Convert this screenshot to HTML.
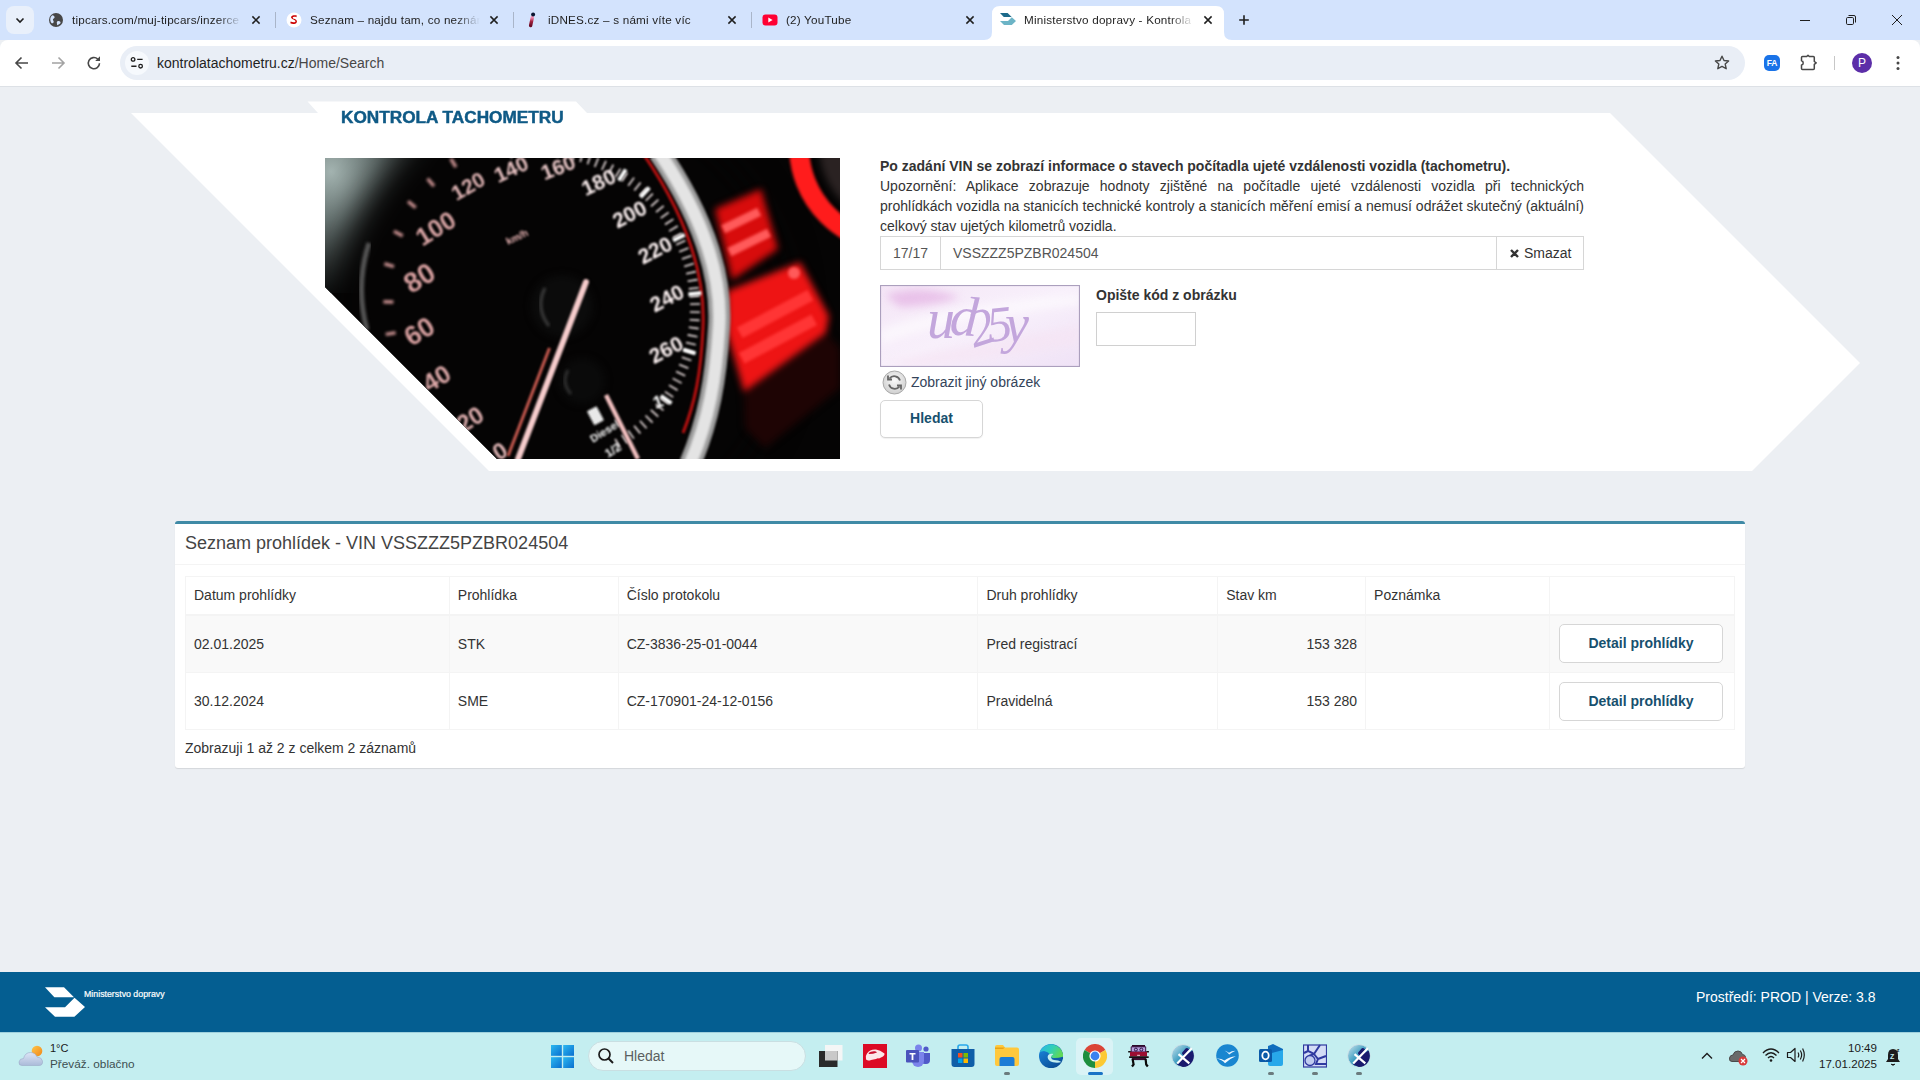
<!DOCTYPE html>
<html><head><meta charset="utf-8">
<style>
*{box-sizing:border-box;margin:0;padding:0}
html,body{width:1920px;height:1080px;overflow:hidden;font-family:"Liberation Sans",sans-serif;background:#eceff3;position:relative}
.abs{position:absolute}
#tabbar{left:0;top:0;width:1920px;height:40px;background:#d3e3fd}
#toolbar{left:0;top:40px;width:1920px;height:47px;background:#fff;border-bottom:1px solid #dde1e6;border-radius:8px 8px 0 0}
#page{left:0;top:87px;width:1920px;height:885px;background:#eceff3}
#footer{left:0;top:972px;width:1920px;height:60px;background:#045e91}
#taskbar{left:0;top:1032px;width:1920px;height:48px;background:#c4eef0}
.tt{top:12px;height:16px;font-size:11.7px;line-height:16px;color:#1f1f1f;white-space:nowrap;overflow:hidden;letter-spacing:0.2px;-webkit-mask-image:linear-gradient(90deg,#000 0,#000 calc(100% - 24px),transparent 100%)}
.sep{top:12px;width:1px;height:16px;background:#a9b5c9}
#tbl th,#tbl td{border:1px solid #f4f4f4;padding:0 8px;text-align:left;font-weight:400;vertical-align:middle}
#tbl th{border-bottom:2px solid #f4f4f4}
.dbtn{width:164px;height:39px;border:1.5px solid #d6d6d6;border-radius:5px;background:#fff;font-weight:700;color:#17506e;text-align:center;line-height:37px;margin-left:1px}
</style></head><body>
<!-- TAB BAR -->
<div id="tabbar" class="abs">
  <div class="abs" style="left:6px;top:6px;width:28px;height:28px;border-radius:8px;background:#e9f0fb"></div>
  <svg class="abs" style="left:13px;top:13px" width="14" height="14" viewBox="0 0 14 14"><path d="M3.5 5.5 L7 9 L10.5 5.5" fill="none" stroke="#1f1f1f" stroke-width="1.6"/></svg>

  <!-- tab 1 -->
  <svg class="abs" style="left:48px;top:12px" width="16" height="16" viewBox="0 0 16 16"><circle cx="8" cy="8" r="7" fill="#474747"/><path d="M4.2 3.2c1.5.2 2.6 1 2.4 2.2-.2 1-1.6 1.1-1.7 2.2-.1.9 1 1.3.8 2.5-.2.9-1.2 1.4-2 1.2C2.5 10 2 8 2.4 6c.3-1.2 1-2.2 1.8-2.8zM9.5 9.2c.9-.4 2.2-.2 2.8.5.4.5.3 1.3-.2 1.9-.8.9-2 1.5-3.1 1.6.3-.6.1-1.2-.1-1.8-.2-.9-.2-1.8.6-2.2z" fill="#d3e3fd"/></svg>
  <div class="abs tt" style="left:72px;width:170px">tipcars.com/muj-tipcars/inzerce</div>
  <svg class="abs xb" style="left:250px;top:14px" width="12" height="12" viewBox="0 0 12 12"><path d="M2.4 2.4L9.6 9.6M9.6 2.4L2.4 9.6" stroke="#1f1f1f" stroke-width="1.5"/></svg>
  <div class="abs sep" style="left:275px"></div>

  <!-- tab 2 -->
  <svg class="abs" style="left:286px;top:12px" width="16" height="16" viewBox="0 0 16 16"><circle cx="8" cy="8" r="7.5" fill="#fff"/><path d="M10.8 3.6C9.4 2.9 6.2 3 5.3 4.6c-.9 1.7 1.2 2.6 2.9 3.3 1.5.6 1.6 1.5.9 2-.9.6-3 .4-4.4-.4l-.4 1.8c1.8.9 4.8 1 6.1-.4 1.2-1.4.4-2.9-1.6-3.8-1.4-.6-2.3-1-2-1.7.4-.7 2.6-.7 3.6-.2z" fill="#cc0000"/></svg>
  <div class="abs tt" style="left:310px;width:170px">Seznam – najdu tam, co neznám</div>
  <svg class="abs xb" style="left:488px;top:14px" width="12" height="12" viewBox="0 0 12 12"><path d="M2.4 2.4L9.6 9.6M9.6 2.4L2.4 9.6" stroke="#1f1f1f" stroke-width="1.5"/></svg>
  <div class="abs sep" style="left:513px"></div>

  <!-- tab 3 -->
  <svg class="abs" style="left:524px;top:12px" width="16" height="16" viewBox="0 0 16 16"><defs><linearGradient id="idn" x1="0" y1="0" x2="0" y2="1"><stop offset="0" stop-color="#f08ab0"/><stop offset="0.5" stop-color="#a0203e"/><stop offset="1" stop-color="#6a0b26"/></linearGradient></defs><path d="M8.3 5.6L6.6 13.6" stroke="url(#idn)" stroke-width="3.4" stroke-linecap="round"/><circle cx="9.1" cy="2.4" r="2" fill="#0a1530"/></svg>
  <div class="abs tt" style="left:548px;width:170px">iDNES.cz – s námi víte víc</div>
  <svg class="abs xb" style="left:726px;top:14px" width="12" height="12" viewBox="0 0 12 12"><path d="M2.4 2.4L9.6 9.6M9.6 2.4L2.4 9.6" stroke="#1f1f1f" stroke-width="1.5"/></svg>
  <div class="abs sep" style="left:751px"></div>

  <!-- tab 4 -->
  <svg class="abs" style="left:762px;top:12px" width="16" height="16" viewBox="0 0 16 16"><rect x="0.5" y="2.5" width="15" height="11" rx="3" fill="#ff0033"/><path d="M6.3 5.4v5.2L10.6 8z" fill="#fff"/></svg>
  <div class="abs tt" style="left:786px;width:170px">(2) YouTube</div>
  <svg class="abs xb" style="left:964px;top:14px" width="12" height="12" viewBox="0 0 12 12"><path d="M2.4 2.4L9.6 9.6M9.6 2.4L2.4 9.6" stroke="#1f1f1f" stroke-width="1.5"/></svg>

  <!-- active tab -->
  <svg class="abs" style="left:984px;top:6px" width="248" height="35" viewBox="0 0 248 35"><path d="M0 34 Q8 34 8 26 V8 Q8 0 16 0 H232 Q240 0 240 8 V26 Q240 34 248 34 V35 H0Z" fill="#fff"/></svg>
  <svg class="abs" style="left:1000px;top:13px" width="16" height="12" viewBox="45 987 40 30"><polygon points="45,987.2 64,987.2 74,997.2 54.4,997.2" fill="#1d6a8a"/><polygon points="74.5,997.7 85,1007 74.4,1016.7 55,1016.7 45,1007.2 65,1007.2" fill="#6cb4c6"/></svg>
  <div class="abs tt tta" style="left:1024px;width:170px">Ministerstvo dopravy - Kontrola</div>
  <svg class="abs xb" style="left:1202px;top:14px" width="12" height="12" viewBox="0 0 12 12"><path d="M2.4 2.4L9.6 9.6M9.6 2.4L2.4 9.6" stroke="#1f1f1f" stroke-width="1.5"/></svg>

  <svg class="abs" style="left:1236px;top:12px" width="16" height="16" viewBox="0 0 16 16"><path d="M8 3.2V12.8M3.2 8H12.8" stroke="#1f1f1f" stroke-width="1.6"/></svg>

  <!-- window controls -->
  <svg class="abs" style="left:1797px;top:12px" width="16" height="16" viewBox="0 0 16 16"><path d="M3 8.5H13" stroke="#1f1f1f" stroke-width="1"/></svg>
  <svg class="abs" style="left:1843px;top:12px" width="16" height="16" viewBox="0 0 16 16"><rect x="3.5" y="5.5" width="7" height="7" rx="1.2" fill="none" stroke="#1f1f1f" stroke-width="1"/><path d="M5.5 3.5H11a1.5 1.5 0 0 1 1.5 1.5V10.5" fill="none" stroke="#1f1f1f" stroke-width="1"/></svg>
  <svg class="abs" style="left:1889px;top:12px" width="16" height="16" viewBox="0 0 16 16"><path d="M3 3L13 13M13 3L3 13" stroke="#1f1f1f" stroke-width="1"/></svg>
</div>

<!-- TOOLBAR -->
<div id="toolbar" class="abs">
  <svg class="abs" style="left:12px;top:13px" width="20" height="20" viewBox="0 0 20 20"><path d="M16 10H4.5M9.5 4.5L4 10l5.5 5.5" fill="none" stroke="#474747" stroke-width="1.6"/></svg>
  <svg class="abs" style="left:48px;top:13px" width="20" height="20" viewBox="0 0 20 20"><path d="M4 10H15.5M10.5 4.5L16 10l-5.5 5.5" fill="none" stroke="#a3a3a3" stroke-width="1.6"/></svg>
  <svg class="abs" style="left:84px;top:13px" width="20" height="20" viewBox="0 0 20 20"><path d="M15.5 10.2a5.6 5.6 0 1 1-1.8-4.2" fill="none" stroke="#474747" stroke-width="1.6"/><path d="M16 3.2V8H11.2Z" fill="#474747"/></svg>
  <div class="abs" id="omni" style="left:120px;top:6px;width:1625px;height:34px;border-radius:17px;background:#e9eef6"></div>
  <div class="abs" style="left:125px;top:11px;width:24px;height:24px;border-radius:12px;background:#f6f9fd"></div>
  <svg class="abs" style="left:129px;top:15px" width="16" height="16" viewBox="0 0 16 16"><circle cx="4.1" cy="4.4" r="1.8" fill="none" stroke="#1f1f1f" stroke-width="1.3"/><path d="M8.2 4.4H13.6M2.3 11.2H7.5" stroke="#1f1f1f" stroke-width="1.4"/><circle cx="11.6" cy="11.2" r="1.8" fill="none" stroke="#1f1f1f" stroke-width="1.3"/></svg>
  <div class="abs" style="left:157px;top:14px;font-size:14px;line-height:18px;color:#1f1f1f;white-space:nowrap">kontrolatachometru.cz<span style="color:#474747">/Home/Search</span></div>
  <svg class="abs" style="left:1712px;top:13px" width="20" height="20" viewBox="0 0 20 20"><path d="M10 3.2l2 4.3 4.6.5-3.4 3.1 1 4.6L10 13.4l-4.2 2.3 1-4.6L3.4 8l4.6-.5z" fill="none" stroke="#474747" stroke-width="1.4" stroke-linejoin="round"/></svg>
  <div class="abs" style="left:1764px;top:15px;width:16px;height:16px;border-radius:5px;background:#1a73e8;color:#fff;font-size:8.5px;font-weight:700;line-height:16px;text-align:center;letter-spacing:-0.2px">FA</div>
  <svg class="abs" style="left:1798px;top:13px" width="20" height="20" viewBox="0 0 20 20"><path d="M3.5 4.5Q3.5 3.5 4.5 3.5H8.7L10 2.2L11.3 3.5H15.3Q16.3 3.5 16.3 4.5V8.5L18.2 9.9L16.3 11.3V15.5Q16.3 16.5 15.3 16.5H4.5Q3.5 16.5 3.5 15.5V12Q5.2 11.8 5.2 9.9Q5.2 8 3.5 7.8Z" fill="none" stroke="#474747" stroke-width="1.5" stroke-linejoin="round"/></svg>
  <div class="abs" style="left:1834px;top:16px;width:1px;height:14px;background:#c7c7c7"></div>
  <div class="abs" style="left:1852px;top:13px;width:20px;height:20px;border-radius:10px;background:#5c2ea8;color:#fff;font-size:12px;line-height:20px;text-align:center">P</div>
  <svg class="abs" style="left:1888px;top:13px" width="20" height="20" viewBox="0 0 20 20"><circle cx="10" cy="4.5" r="1.5" fill="#474747"/><circle cx="10" cy="10" r="1.5" fill="#474747"/><circle cx="10" cy="15.5" r="1.5" fill="#474747"/></svg>
</div>
<div id="page" class="abs">
  <!-- panel polygon -->
  <svg class="abs" style="left:0;top:0" width="1920" height="400" viewBox="0 87 1920 400">
    <polygon points="307.5,101.6 576,101.6 587,113 318,113" fill="#fff"/>
    <polygon points="131,113 1610,113 1860,363 1752,471 489,471" fill="#fff"/>
  </svg>
  <div class="abs" id="ktitle" style="left:341px;top:21px;font-size:16px;font-weight:700;color:#0f5a86;white-space:nowrap;line-height:20px;transform:scaleX(1.075);transform-origin:0 0;-webkit-text-stroke:0.45px #0f5a86">KONTROLA TACHOMETRU</div>

  <!-- speedometer image -->
  <svg class="abs" style="left:325px;top:71px" width="515" height="301" viewBox="0 0 515 301">
    <defs>
      <clipPath id="cp"><polygon points="0,0 515,0 515,301 172,301 0,129"/></clipPath>
      <radialGradient id="glare" cx="0.05" cy="0.1" r="0.9"><stop offset="0" stop-color="#a3b3b0"/><stop offset="0.4" stop-color="#6a7775"/><stop offset="1" stop-color="#101212"/></radialGradient>
      <radialGradient id="face" cx="0.5" cy="0.5" r="0.5"><stop offset="0.85" stop-color="#050404"/><stop offset="1" stop-color="#050404" stop-opacity="0"/></radialGradient>
      <filter color-interpolation-filters="sRGB" id="bl1" x="-20%" y="-20%" width="140%" height="140%"><feGaussianBlur stdDeviation="0.9"/></filter>
      <filter color-interpolation-filters="sRGB" id="bl15" x="-20%" y="-20%" width="140%" height="140%"><feGaussianBlur stdDeviation="1.5"/></filter>
      <filter color-interpolation-filters="sRGB" id="bl2" x="-30%" y="-30%" width="160%" height="160%"><feGaussianBlur stdDeviation="3.5"/></filter>
      <filter color-interpolation-filters="sRGB" id="bl3" x="-50%" y="-50%" width="200%" height="200%"><feGaussianBlur stdDeviation="8"/></filter>
      <filter color-interpolation-filters="sRGB" id="bl4" x="-50%" y="-50%" width="200%" height="200%"><feGaussianBlur stdDeviation="16"/></filter>
    </defs>
    <g clip-path="url(#cp)">
      <rect width="515" height="301" fill="#050404"/>
      <rect x="0" y="0" width="120" height="135" fill="url(#glare)"/>
      <ellipse cx="236" cy="162" rx="230" ry="226" fill="#050404" filter="url(#bl4)"/>
      <path d="M44 85Q30 128 42 172" fill="none" stroke="#555" stroke-width="5" filter="url(#bl15)"/>
      <!-- top right red ring + bezel -->
      <circle cx="572" cy="-12" r="78" fill="#2a2222" filter="url(#bl2)"/>
      <circle cx="572" cy="-12" r="98" fill="none" stroke="#ff1c1c" stroke-width="20" filter="url(#bl15)"/>
      <!-- red displays -->
      <g filter="url(#bl2)">
        <polygon points="390,51 436,31 453,91 407,122" fill="#d80c0c"/>
        <polygon points="402,133 475,104 504,158 501,175 419,234 402,175" fill="#ee1414"/>
        <polygon points="419,234 501,175 515,190 515,230 440,290 420,270" fill="#1e0404"/>
      </g>
      <g filter="url(#bl15)" fill="#ff5a5a">
        <rect x="396" y="58" width="40" height="9" transform="rotate(-26 416 62)"/>
        <rect x="402" y="80" width="44" height="9" transform="rotate(-26 424 84)"/>
        <circle cx="469" cy="115" r="6"/>
        <rect x="410" y="150" width="80" height="12" transform="rotate(-28 450 156)" fill="#ff3535"/>
        <rect x="412" y="175" width="82" height="12" transform="rotate(-28 453 181)" fill="#ff3535"/>
      </g>
      <!-- silver ring -->
      <path d="M334 -6C372 50 398 110 394 170C391 220 384 262 365 306" fill="none" stroke="#9a9a9a" stroke-width="22" filter="url(#bl1)"/>
      <path d="M334 -6C372 50 398 110 394 170C391 220 384 262 365 306" fill="none" stroke="#e4e4e4" stroke-width="13" filter="url(#bl15)"/>
      <path d="M317 -6C356 50 381 110 378 170C376 215 370 245 358 275" fill="none" stroke="#b81010" stroke-width="3" filter="url(#bl1)"/>
      <!-- hubs -->
      <circle cx="237" cy="148" r="31" fill="#0b0b0b" filter="url(#bl2)"/>
      <path d="M220 130Q210 150 224 168" fill="none" stroke="#3c3c3c" stroke-width="3" filter="url(#bl15)"/>
      <circle cx="257" cy="223" r="23" fill="#0a0a0a" filter="url(#bl2)"/>
      <path d="M243 212Q236 225 246 236" fill="none" stroke="#303030" stroke-width="3" filter="url(#bl15)"/>
      <!-- ticks -->
      <g stroke="#f4e8e8" stroke-width="1.6" filter="url(#bl1)"><path d="M186.6 0.3L184.9 -9.5"/><path d="M194.2 -0.8L193.0 -10.8"/><path d="M201.9 -1.6L201.1 -11.6"/><path d="M209.6 -2.0L209.3 -12.0"/><path d="M217.2 -1.9L217.5 -11.9"/><path d="M224.9 -1.5L225.7 -11.5"/><path d="M232.6 -0.7L233.9 -10.7"/><path d="M240.2 0.4L242.0 -9.4"/><path d="M247.7 2.0L250.0 -7.7"/><path d="M255.2 4.0L257.9 -5.6"/><path d="M262.5 6.3L265.7 -3.2"/><path d="M269.7 9.0L273.4 -0.3"/><path d="M276.8 12.0L281.0 2.9"/><path d="M283.7 15.4L288.3 6.6"/><path d="M290.4 19.2L295.5 10.6"/><path d="M296.9 23.2L302.4 14.9"/><path d="M303.2 27.7L309.1 19.6"/><path d="M309.3 32.4L315.6 24.6"/><path d="M315.1 37.4L321.8 30.0"/><path d="M320.7 42.7L327.8 35.6"/><path d="M326.0 48.3L333.4 41.6"/><path d="M331.0 54.1L338.7 47.8"/><path d="M335.7 60.2L343.7 54.3"/><path d="M340.0 66.5L348.4 61.1"/><path d="M344.1 73.1L352.7 68.0"/><path d="M347.8 79.8L356.7 75.2"/><path d="M351.2 86.7L360.3 82.6"/><path d="M354.2 93.8L363.5 90.1"/><path d="M356.9 101.0L366.4 97.8"/><path d="M359.2 108.4L368.8 105.6"/><path d="M361.1 115.8L370.8 113.6"/><path d="M362.6 123.3L372.5 121.6"/><path d="M363.8 130.9L373.7 129.7"/><path d="M364.6 138.6L374.5 137.9"/><path d="M365.0 146.3L375.0 146.0"/><path d="M364.9 154.0L374.9 154.2"/><path d="M364.6 161.7L374.5 162.4"/><path d="M363.8 169.3L373.7 170.6"/><path d="M362.6 176.9L372.4 178.7"/><path d="M361.0 184.5L370.8 186.7"/><path d="M359.1 191.9L368.7 194.7"/><path d="M356.8 199.2L366.3 202.5"/><path d="M354.1 206.4L363.4 210.2"/><path d="M351.1 213.5L360.2 217.7"/><path d="M347.7 220.4L356.6 225.1"/><path d="M344.0 227.1L352.6 232.2"/><path d="M339.9 233.7L348.2 239.2"/><path d="M335.5 240.0L343.6 245.9"/><path d="M330.8 246.1L338.5 252.4"/><path d="M325.8 251.9L333.2 258.6"/><path d="M320.5 257.5L327.6 264.6"/><path d="M314.9 262.8L321.6 270.2"/><path d="M309.1 267.8L315.4 275.5"/><path d="M303.0 272.5L308.9 280.6"/><path d="M296.7 276.9L302.2 285.2"/><path d="M290.1 281.0L295.2 289.6"/></g>
      <g stroke="#fff" stroke-width="4" filter="url(#bl1)"><path d="M315.5 39.1L324.3 29.6"/><path d="M348.1 82.5L359.7 76.7"/><path d="M363.4 136.2L376.3 135.1"/><path d="M358.1 191.7L370.6 195.3"/><path d="M335.8 237.9L346.4 245.4"/><path d="M293.8 22.5L300.8 11.5"/></g>
      <g stroke="#c89090" stroke-width="3.5" filter="url(#bl15)"><path d="M70.6 174.7L60.7 176.4"/><path d="M68.4 144.1L58.4 143.7"/><path d="M69.0 108.6L59.4 105.8"/><path d="M77.7 77.9L68.9 73.2"/><path d="M90.7 49.6L83.0 43.3"/><path d="M109.0 28.2L102.5 20.6"/><path d="M130.9 9.2L125.8 0.6"/></g>
      <!-- numbers -->
      <g font-family="Liberation Sans" font-weight="700" filter="url(#bl1)"><text x="143" y="28" font-size="21" fill="#e0b4b4" text-anchor="middle" dominant-baseline="central" transform="rotate(-30 143 28)">120</text><text x="186" y="11" font-size="21" fill="#e6c0c0" text-anchor="middle" dominant-baseline="central" transform="rotate(-25 186 11)">140</text><text x="233" y="9" font-size="21" fill="#eccaca" text-anchor="middle" dominant-baseline="central" transform="rotate(-22 233 9)">160</text><text x="273.5" y="24" font-size="21" fill="#fbeeee" text-anchor="middle" dominant-baseline="central" transform="rotate(-25 273.5 24)">180</text><text x="304.5" y="56" font-size="21" fill="#fff4f4" text-anchor="middle" dominant-baseline="central" transform="rotate(-28 304.5 56)">200</text><text x="330" y="92" font-size="21" fill="#fff4f4" text-anchor="middle" dominant-baseline="central" transform="rotate(-28 330 92)">220</text><text x="341.8" y="140" font-size="21" fill="#fff4f4" text-anchor="middle" dominant-baseline="central" transform="rotate(-28 341.8 140)">240</text><text x="341" y="191.5" font-size="21" fill="#fff4f4" text-anchor="middle" dominant-baseline="central" transform="rotate(-28 341 191.5)">260</text><text x="333" y="244" font-size="17" fill="#fff" text-anchor="middle" dominant-baseline="central" transform="rotate(-20 333 244)">1</text><text x="110.5" y="70" font-size="25" fill="#d8a4a4" text-anchor="middle" dominant-baseline="central" transform="rotate(-32 110.5 70)">100</text><text x="94.5" y="120" font-size="28" fill="#d8a0a0" text-anchor="middle" dominant-baseline="central" transform="rotate(-32 94.5 120)">80</text><text x="94.5" y="173.5" font-size="27" fill="#d8a0a0" text-anchor="middle" dominant-baseline="central" transform="rotate(-32 94.5 173.5)">60</text><text x="111.4" y="220" font-size="25" fill="#dca8a8" text-anchor="middle" dominant-baseline="central" transform="rotate(-32 111.4 220)">40</text><text x="145" y="261" font-size="24" fill="#e0b0b0" text-anchor="middle" dominant-baseline="central" transform="rotate(-32 145 261)">20</text><text x="175" y="293" font-size="23" fill="#e6baba" text-anchor="middle" dominant-baseline="central" transform="rotate(-32 175 293)">0</text><text x="192" y="79" font-size="10" fill="#e8b4b4" text-anchor="middle" dominant-baseline="central" transform="rotate(-25 192 79)">km/h</text></g>
      <g font-family="Liberation Sans" font-weight="700" fill="#fff" filter="url(#bl1)">
        <text x="268" y="285" font-size="11" transform="rotate(-32 268 285)">Diesel</text>
        <text x="283" y="300" font-size="12" transform="rotate(-32 283 300)">1/2</text>
      </g>
      <rect x="265" y="250" width="11" height="16" rx="1" fill="#e8e8e8" transform="rotate(-28 270 258)" filter="url(#bl1)"/>
      <!-- needles -->
      <path d="M261 124L193 301" stroke="#f6cccc" stroke-width="6" stroke-linecap="round" filter="url(#bl1)"/>
      <path d="M224.5 190L183 298" stroke="#c85a50" stroke-width="3" filter="url(#bl1)"/>
      <path d="M281 237L313 301" stroke="#f2c0c0" stroke-width="4.5" filter="url(#bl1)"/>
    </g>
  </svg>

  <!-- form -->
  <div class="abs" style="left:880px;top:69px;width:704px;font-size:14px;line-height:20px;color:#333;text-align:justify">
    <b style="color:#333">Po zadání VIN se zobrazí informace o stavech počítadla ujeté vzdálenosti vozidla (tachometru).</b><br>
    Upozornění: Aplikace zobrazuje hodnoty zjištěné na počítadle ujeté vzdálenosti vozidla při technických prohlídkách vozidla na stanicích technické kontroly a stanicích měření emisí a nemusí odrážet skutečný (aktuální) celkový stav ujetých kilometrů vozidla.
  </div>
  <div class="abs" style="left:880px;top:149px;width:704px;height:34px;border:1px solid #d6d6d6;background:#fff"></div>
  <div class="abs" style="left:880px;top:149px;width:61px;height:34px;border:1px solid #d6d6d6;background:#fff;font-size:14px;line-height:32px;text-align:center;color:#555">17/17</div>
  <div class="abs" style="left:953px;top:150px;font-size:14px;line-height:32px;color:#555">VSSZZZ5PZBR024504</div>
  <div class="abs" style="left:1496px;top:149px;width:88px;height:34px;border:1px solid #d6d6d6;background:#fff;font-size:14px;line-height:32px;color:#333;padding-left:12px;white-space:nowrap"><svg width="11" height="11" viewBox="0 0 11 11" style="vertical-align:-1px"><path d="M2 2L9 9M9 2L2 9" stroke="#333" stroke-width="2.4"/></svg> Smazat</div>

  <!-- captcha -->
  <svg class="abs" style="left:880px;top:198px" width="200" height="82" viewBox="0 0 200 82">
    <defs>
      <linearGradient id="cg" x1="0" y1="0" x2="1" y2="1"><stop offset="0" stop-color="#f4e6f6"/><stop offset="0.5" stop-color="#f8f0fb"/><stop offset="1" stop-color="#efe2f6"/></linearGradient>
      <filter color-interpolation-filters="sRGB" id="cb" x="-20%" y="-50%" width="140%" height="200%"><feGaussianBlur stdDeviation="4"/></filter>
    </defs>
    <rect x="0" y="0" width="200" height="82" fill="url(#cg)"/>
    <path d="M5 10 Q40 -2 80 12 Q60 20 20 22 Z" fill="#e6b8e6" opacity=".8" filter="url(#cb)"/>
    <path d="M0 45 Q60 20 200 10 L200 20 Q80 30 0 60Z" fill="#ffffff" opacity=".55" filter="url(#cb)"/>
    <path d="M0 78 Q90 60 200 40 L200 60 Q100 75 40 82Z" fill="#f6e4f3" opacity=".6" filter="url(#cb)"/>
    <g font-family="Liberation Serif" font-style="italic" fill="#c3a6dc">
      <text x="47" y="53" font-size="56">u</text>
      <text x="70" y="50" font-size="56" transform="rotate(4 80 35)">d</text>
      <text x="89" y="60" font-size="52" transform="rotate(-18 100 45)">2</text>
      <text x="107" y="56" font-size="50" transform="rotate(-6 118 40)">5</text>
      <text x="125" y="57" font-size="54">y</text>
    </g>
    <rect x="0.5" y="0.5" width="199" height="81" fill="none" stroke="#ab9fbd" stroke-width="1.2"/>
  </svg>
  <div class="abs" style="left:1096px;top:198px;font-size:14px;font-weight:700;line-height:20px;color:#333">Opište kód z obrázku</div>
  <div class="abs" style="left:1096px;top:225px;width:100px;height:34px;border:1px solid #d0d0d0;background:#fff"></div>
  <svg class="abs" style="left:882px;top:283px" width="25" height="25" viewBox="0 0 25 25">
    <defs><radialGradient id="rg" cx=".5" cy=".4" r=".6"><stop offset="0" stop-color="#fafafa"/><stop offset="1" stop-color="#cfcfcf"/></radialGradient></defs>
    <circle cx="12.5" cy="12.5" r="11.5" fill="url(#rg)" stroke="#aaa" stroke-width="1"/>
    <path d="M18 10.5a6 6 0 0 0-10.5-2M7 14.5a6 6 0 0 0 10.5 2" fill="none" stroke="#666" stroke-width="1.8"/>
    <path d="M6 5.5v4h4M19 19.5v-4h-4" fill="none" stroke="#666" stroke-width="1.8"/>
  </svg>
  <div class="abs" style="left:911px;top:285px;font-size:14px;line-height:20px;color:#34445a">Zobrazit jiný obrázek</div>
  <div class="abs" style="left:880px;top:313px;width:103px;height:38px;border:1.5px solid #d6d6d6;border-radius:5px;background:#fff;box-shadow:0 1px 1px rgba(0,0,0,.06);font-size:14px;font-weight:700;line-height:35px;text-align:center;color:#17506e">Hledat</div>

  <!-- table card -->
  <div class="abs" style="left:175px;top:434px;width:1570px;height:247px;background:#fff;border-top:3px solid #3f8aa6;border-radius:3px;box-shadow:0 1px 1px rgba(0,0,0,.1)"></div>
  <div class="abs" style="left:185px;top:445px;font-size:18px;line-height:22px;color:#444;white-space:nowrap">Seznam prohlídek - VIN VSSZZZ5PZBR024504</div>
  <div class="abs" style="left:175px;top:477px;width:1570px;height:1px;background:#f4f4f4"></div>
  <div id="tbl" class="abs" style="left:185px;top:489px;width:1550px">
    <table style="border-collapse:collapse;width:1550px;font-size:14px;color:#333">
      <colgroup><col style="width:264px"><col style="width:169px"><col style="width:360px"><col style="width:240px"><col style="width:148px"><col style="width:184px"><col style="width:185px"></colgroup>
      <tr style="height:38px"><th>Datum prohlídky</th><th>Prohlídka</th><th>Číslo protokolu</th><th>Druh prohlídky</th><th>Stav km</th><th>Poznámka</th><th></th></tr>
      <tr style="height:58px;background:#f9f9f9"><td>02.01.2025</td><td>STK</td><td>CZ-3836-25-01-0044</td><td>Pred registrací</td><td style="text-align:right">153 328</td><td></td><td><div class="dbtn">Detail prohlídky</div></td></tr>
      <tr style="height:57px"><td>30.12.2024</td><td>SME</td><td>CZ-170901-24-12-0156</td><td>Pravidelná</td><td style="text-align:right">153 280</td><td></td><td><div class="dbtn">Detail prohlídky</div></td></tr>
    </table>
  </div>
  <div class="abs" style="left:185px;top:651px;font-size:14px;line-height:20px;color:#333;white-space:nowrap">Zobrazuji 1 až 2 z celkem 2 záznamů</div>
</div>

<!-- FOOTER -->
<div id="footer" class="abs">
  <svg class="abs" style="left:44px;top:14px" width="44" height="33" viewBox="44 986 44 33">
    <polygon points="45,987.2 64,987.2 74,997.2 54.4,997.2" fill="#fff"/>
    <polygon points="74.5,997.7 85,1007 74.4,1016.7 55,1016.7 45,1007.2 65,1007.2" fill="#fff"/>
  </svg>
  <div class="abs" style="left:84px;top:17px;font-size:8.8px;font-weight:400;color:#fff;line-height:10px;white-space:nowrap;-webkit-text-stroke:0.2px #fff">Ministerstvo dopravy</div>
  <div class="abs" style="left:1696px;top:15px;font-size:14px;line-height:20px;color:#fff;white-space:nowrap">Prostředí: PROD | Verze: 3.8</div>
</div>
<div id="taskbar" class="abs">
  <div class="abs" style="left:0;top:0;width:1920px;height:1px;background:#9fd0dc"></div>
  <!-- weather -->
  <svg class="abs" style="left:16px;top:1043px;top:11px" width="30" height="26" viewBox="0 0 30 26">
    <defs><linearGradient id="sun" x1="0" y1="0" x2="1" y2="1"><stop offset="0" stop-color="#ffc64a"/><stop offset="1" stop-color="#f0861a"/></linearGradient>
    <linearGradient id="cld" x1="0" y1="0" x2="0" y2="1"><stop offset="0" stop-color="#dfe6f8"/><stop offset="1" stop-color="#aab8d8"/></linearGradient></defs>
    <circle cx="21" cy="8" r="5.3" fill="url(#sun)"/>
    <path d="M6 22.5 Q2.5 22.5 3 19 Q3.5 15.5 7.5 15.5 Q9 9.5 14.5 9.5 Q19.5 9.5 21 14 Q25.5 14 26.5 18 Q27 22.5 23 22.5Z" fill="url(#cld)" stroke="#9aa8c6" stroke-width=".6" opacity=".95"/>
  </svg>
  <div class="abs" style="left:50px;top:9px;font-size:11px;line-height:14px;color:#1a1a1a;white-space:nowrap">1°C</div>
  <div class="abs" style="left:50px;top:25px;font-size:11.8px;line-height:14px;color:#3d4f50;white-space:nowrap">Převáž. oblačno</div>

  <!-- windows logo -->
  <svg class="abs" style="left:551px;top:13px" width="23" height="23" viewBox="0 0 23 23">
    <defs><linearGradient id="wl" x1="0" y1="0" x2="1" y2="1"><stop offset="0" stop-color="#2bb8f0"/><stop offset="1" stop-color="#0a6fd0"/></linearGradient></defs>
    <rect x="0" y="0" width="10.8" height="10.8" fill="url(#wl)"/><rect x="12.2" y="0" width="10.8" height="10.8" fill="url(#wl)"/>
    <rect x="0" y="12.2" width="10.8" height="10.8" fill="url(#wl)"/><rect x="12.2" y="12.2" width="10.8" height="10.8" fill="url(#wl)"/>
  </svg>
  <!-- search -->
  <div class="abs" style="left:588px;top:9px;width:218px;height:30px;border-radius:15px;background:#e6f8f8;border:1px solid #c9dfe2"></div>
  <svg class="abs" style="left:597px;top:15px" width="18" height="18" viewBox="0 0 18 18"><circle cx="7.5" cy="7.5" r="5.5" fill="none" stroke="#1c1c1c" stroke-width="1.7"/><path d="M11.5 11.5L16 16" stroke="#1c1c1c" stroke-width="1.9"/></svg>
  <div class="abs" style="left:624px;top:15px;font-size:14px;line-height:18px;color:#5b5f60">Hledat</div>

  <!-- task view -->
  <svg class="abs" style="left:818px;top:12px" width="26" height="26" viewBox="0 0 26 26">
    <rect x="7" y="1" width="17.5" height="15.5" fill="#f4f6f6"/>
    <rect x="1" y="7" width="18.5" height="16" fill="#2a2a2a"/>
    <rect x="7" y="7" width="12.5" height="9.5" fill="#c9c9c9"/>
  </svg>
  <!-- red app -->
  <svg class="abs" style="left:863px;top:12px" width="24" height="24" viewBox="0 0 24 24">
    <rect width="24" height="24" fill="#dc0a25"/>
    <path d="M3 15.5Q2 12 4 9.5Q7 5 13 5.5Q17 6 21.5 9.5Q22 11 20 12.5L16 14.5Q14.5 14 13 15L8 16Q6.5 16.8 5 16.5Z" fill="#fde6e8"/>
    <path d="M5.5 9Q8 6.8 12 7.2Q13.5 7.5 14 8.5Q10 10 6 10Z" fill="#c8102e"/>
  </svg>
  <!-- teams -->
  <svg class="abs" style="left:906px;top:12px" width="26" height="24" viewBox="0 0 26 24">
    <circle cx="12.5" cy="4" r="3.5" fill="#7b83eb"/><circle cx="20" cy="5" r="2.6" fill="#5059c9"/>
    <path d="M15 9h9v7a4 4 0 0 1-4 4h-1a4 4 0 0 1-4-4z" fill="#5059c9"/>
    <path d="M7 8h11v9a6 6 0 0 1-6 6h0a6 6 0 0 1-6-6z" fill="#7b83eb"/>
    <rect x="0" y="6" width="13" height="12.5" rx="1" fill="#4b53bc"/>
    <path d="M3.5 9h6v1.6H7.4V16H5.6v-5.4H3.5z" fill="#fff"/>
  </svg>
  <!-- store -->
  <svg class="abs" style="left:951px;top:12px" width="24" height="24" viewBox="0 0 24 24">
    <path d="M7 5V3a2 2 0 0 1 2-2h6a2 2 0 0 1 2 2v2" fill="none" stroke="#28a8ea" stroke-width="1.6"/>
    <path d="M0.5 5h23v15a3 3 0 0 1-3 3H3.5a3 3 0 0 1-3-3z" fill="#0f5ea8"/>
    <rect x="7" y="9" width="4.5" height="4.5" fill="#f25022"/><rect x="12.5" y="9" width="4.5" height="4.5" fill="#7fba00"/>
    <rect x="7" y="14.5" width="4.5" height="4.5" fill="#00a4ef"/><rect x="12.5" y="14.5" width="4.5" height="4.5" fill="#ffb900"/>
  </svg>
  <!-- explorer -->
  <svg class="abs" style="left:995px;top:13px" width="24" height="22" viewBox="0 0 24 22">
    <path d="M0 2a2 2 0 0 1 2-2h6l2 2.5H22a2 2 0 0 1 2 2V19a2 2 0 0 1-2 2H2a2 2 0 0 1-2-2z" fill="#ffc83d"/>
    <path d="M0 4h8l2-1.5h-10z" fill="#e8a317"/>
    <path d="M4.5 14a2 2 0 0 1 2-2h11a2 2 0 0 1 2 2V21h-15z" fill="#1b7cd6"/>
  </svg>
  <div class="abs" style="left:1004px;top:40px;width:6px;height:3px;border-radius:2px;background:#6b7b7d"></div>
  <!-- edge -->
  <svg class="abs" style="left:1039px;top:12px" width="24" height="24" viewBox="0 0 24 24">
    <defs><linearGradient id="eg1" x1="0" y1="0" x2="0.6" y2="1"><stop offset="0" stop-color="#1d8ee6"/><stop offset="1" stop-color="#0b4f98"/></linearGradient>
    <linearGradient id="eg2" x1="0" y1="0" x2="1" y2="0.4"><stop offset="0" stop-color="#2cb4ea"/><stop offset="0.55" stop-color="#2fcfb8"/><stop offset="1" stop-color="#5fd85a"/></linearGradient></defs>
    <circle cx="12.1" cy="12.1" r="12.1" fill="url(#eg1)"/>
    <path d="M0.6 8.6A12.1 12.1 0 0 1 24.2 12.6Q19 14.2 14.5 14Q11.2 13.6 11 11Q10 8 5 7Q2 7.2 0.6 8.6Z" fill="url(#eg2)"/>
    <path d="M13.8 9.8Q9 9.3 8.6 13Q8.8 17 14 18.3Q19 19.2 22.5 18Q19.5 16.2 15 16Q12.4 15.8 12 13.3Q12 11 14.2 10.4Z" fill="#c4eef0"/>
  </svg>
  <!-- chrome (active) -->
  <div class="abs" style="left:1076px;top:6px;width:37px;height:37px;border-radius:5px;background:#daf3f6"></div>
  <svg class="abs" style="left:1083px;top:12px" width="24" height="24" viewBox="0 0 24 24">
    <path d="M12 12 L1.6 6 A12 12 0 0 1 22.4 6 Z" fill="#db4437"/>
    <path d="M12 12 L22.4 6 A12 12 0 0 1 12 24 Z" fill="#fcc934"/>
    <path d="M12 12 L12 24 A12 12 0 0 1 1.6 6 Z" fill="#1e8e3e"/>
    <circle cx="12" cy="12" r="5.6" fill="#fff"/><circle cx="12" cy="12" r="4.4" fill="#3b82f0"/>
  </svg>
  <div class="abs" style="left:1088px;top:40px;width:15px;height:3px;border-radius:2px;background:#1a73c6"></div>
  <!-- car app -->
  <svg class="abs" style="left:1127px;top:12px" width="24" height="24" viewBox="0 0 24 24">
    <rect x="5" y="1" width="13" height="2" fill="#2a0a2a"/>
    <rect x="4.2" y="2.8" width="14.5" height="5.2" fill="#b7a2e0"/>
    <path d="M4.2 2.8H18.7V8H4.2z" fill="none" stroke="#3a1040" stroke-width="1"/>
    <circle cx="8.9" cy="5.6" r="1.5" fill="none" stroke="#2a1040" stroke-width="1"/><circle cx="14.3" cy="5.6" r="1.5" fill="none" stroke="#2a1040" stroke-width="1"/>
    <rect x="1.2" y="7" width="2.6" height="1.5" fill="#111"/><rect x="19.3" y="7" width="2.6" height="1.5" fill="#111"/>
    <rect x="3" y="7.9" width="17" height="4.6" fill="#9c0f32"/>
    <rect x="10.1" y="10.8" width="2.9" height="1" fill="#f4d0d8"/>
    <rect x="2.1" y="12.3" width="19.6" height="1.7" fill="#111"/>
    <rect x="4.8" y="13.8" width="14.5" height="2.3" fill="#3a1030"/>
    <path d="M5.6 15L6.6 20.5L5 22.5M18.6 15L19.2 20.5L20.8 22.5" fill="none" stroke="#0a0a0a" stroke-width="2.2"/>
  </svg>
  <!-- crossover app -->
  <svg class="abs" style="left:1171px;top:12px" width="24" height="24" viewBox="0 0 24 24">
    <defs><linearGradient id="xog1" x1="0" y1="0" x2="1" y2="1"><stop offset="0" stop-color="#cfe6ee"/><stop offset="0.5" stop-color="#3b9cc0"/><stop offset="1" stop-color="#1e6f96"/></linearGradient></defs>
    <circle cx="11.9" cy="11.8" r="11.3" fill="url(#xog1)" stroke="#d8e6ea" stroke-width="0.8"/>
    <path d="M11.5 13 L21.5 6.5 A11.3 11.3 0 0 1 11.9 23.1 L6 20.5Z" fill="#1a1a6e"/>
    <rect x="12.5" y="3.8" width="4.2" height="8" rx="1.5" fill="#1a1a6e" transform="rotate(40 14.6 7.8)"/>
    <path d="M20.8 4.3L6.2 19.5M7.5 10.2L18.3 19.3" stroke="#fff" stroke-width="2.2"/>
  </svg>
  <!-- openoffice -->
  <svg class="abs" style="left:1216px;top:12px" width="23" height="23" viewBox="0 0 23 23">
    <circle cx="11.5" cy="11.5" r="11.3" fill="#1a86d0"/>
    <path d="M8.5 6.5Q11 7.2 13 8.8Q15.5 7 19.5 6.8Q16 8.2 13.2 10.5Q11.5 8 8.5 6.5Z" fill="#e8f4ff"/>
    <path d="M0.5 14.5Q5 14.2 8.5 16.5Q12.5 13 19.8 12.2Q14 14.5 9 19.2Q6 15.5 0.5 14.5Z" fill="#f4faff"/>
  </svg>
  <!-- outlook -->
  <svg class="abs" style="left:1259px;top:12px" width="24" height="23" viewBox="0 0 24 23">
    <path d="M9 2 L14 0 L24 5 V18 H9z" fill="#0f6cbd"/>
    <path d="M9 10 L24 6 V20 a2 2 0 0 1-2 2 H11 a2 2 0 0 1-2-2z" fill="#28a8ea"/>
    <rect x="0" y="5" width="13" height="13" rx="1.5" fill="#0b5aa8"/>
    <ellipse cx="6.5" cy="11.5" rx="3.2" ry="3.8" fill="none" stroke="#fff" stroke-width="1.8"/>
  </svg>
  <div class="abs" style="left:1268px;top:40px;width:6px;height:3px;border-radius:2px;background:#6b7b7d"></div>
  <!-- app 2 -->
  <svg class="abs" style="left:1303px;top:12px" width="24" height="24" viewBox="0 0 24 24">
    <rect x="0.5" y="1" width="23" height="22" fill="#d4dcf6" stroke="#2f3aa0" stroke-width="1.2"/>
    <path d="M5 1 V7 L11 10 L17 1 M11 10 L15 15 L23 12 M15 15 L13 20 L23 20 M5 7 L1 9 M11 10 L6 12" fill="none" stroke="#2f3aa0" stroke-width="2"/>
    <circle cx="7" cy="16.5" r="5" fill="#c0ccf0" stroke="#2f3aa0" stroke-width="1.3"/>
  </svg>
  <div class="abs" style="left:1312px;top:40px;width:6px;height:3px;border-radius:2px;background:#6b7b7d"></div>
  <!-- crossover app 2 -->
  <svg class="abs" style="left:1347px;top:12px" width="24" height="24" viewBox="0 0 24 24">
    <defs><linearGradient id="xog2" x1="0" y1="0" x2="1" y2="1"><stop offset="0" stop-color="#cfe6ee"/><stop offset="0.5" stop-color="#3b9cc0"/><stop offset="1" stop-color="#1e6f96"/></linearGradient></defs>
    <circle cx="11.9" cy="11.8" r="11.3" fill="url(#xog2)" stroke="#d8e6ea" stroke-width="0.8"/>
    <path d="M11.5 13 L21.5 6.5 A11.3 11.3 0 0 1 11.9 23.1 L6 20.5Z" fill="#1a1a6e"/>
    <rect x="12.5" y="3.8" width="4.2" height="8" rx="1.5" fill="#1a1a6e" transform="rotate(40 14.6 7.8)"/>
    <path d="M20.8 4.3L6.2 19.5M7.5 10.2L18.3 19.3" stroke="#fff" stroke-width="2.2"/>
  </svg>
  <div class="abs" style="left:1356px;top:40px;width:6px;height:3px;border-radius:2px;background:#6b7b7d"></div>

  <!-- tray -->
  <svg class="abs" style="left:1699px;top:17px" width="16" height="14" viewBox="0 0 16 14"><path d="M3 9.5L8 4.5L13 9.5" fill="none" stroke="#1c1c1c" stroke-width="1.4"/></svg>
  <svg class="abs" style="left:1729px;top:16px" width="20" height="18" viewBox="0 0 20 18">
    <path d="M3 13.5 Q0 13.5 0.5 10 Q1 7 4 7 Q5 3 9 3 Q12.5 3 13.5 6.5 Q16 6.5 16.5 9 L14 13.5Z" fill="#6a6a6a" stroke="#4a4a4a" stroke-width="1"/>
    <circle cx="14" cy="13" r="4.5" fill="#d93a3a"/>
    <path d="M12 11L16 15M16 11L12 15" stroke="#fff" stroke-width="1.2"/>
  </svg>
  <svg class="abs" style="left:1762px;top:14px" width="18" height="18" viewBox="0 0 18 18">
    <path d="M1 7 Q9 -1 17 7M3.5 9.5 Q9 4 14.5 9.5M6 12 Q9 9 12 12" fill="none" stroke="#1c1c1c" stroke-width="1.4"/><circle cx="9" cy="14.5" r="1.3" fill="#1c1c1c"/>
  </svg>
  <svg class="abs" style="left:1786px;top:14px" width="20" height="18" viewBox="0 0 20 18">
    <path d="M1.5 6.5H4.5L9 2.5V15.5L4.5 11.5H1.5z" fill="none" stroke="#1c1c1c" stroke-width="1.2" stroke-linejoin="round"/>
    <path d="M12 6.5Q13.5 9 12 11.5M14.3 4.5Q17 9 14.3 13.5M16.6 2.5Q20 9 16.6 15.5" fill="none" stroke="#1c1c1c" stroke-width="1.2"/>
  </svg>
  <div class="abs" style="right:43px;top:9px;font-size:11.6px;line-height:14px;color:#1a1a1a;text-align:right;white-space:nowrap">10:49</div>
  <div class="abs" style="right:43px;top:25px;font-size:11.6px;line-height:14px;color:#1a1a1a;text-align:right;white-space:nowrap">17.01.2025</div>
  <svg class="abs" style="left:1884px;top:15px" width="18" height="20" viewBox="0 0 18 20">
    <path d="M9 2 Q4 2 4 8 V12 L2 15 H16 L14 12 V8 Q14 2 9 2z" fill="#1c1c1c"/><path d="M7 17 Q9 19.5 11 17" fill="#1c1c1c" stroke="#1c1c1c"/>
    <text x="6" y="12" font-size="7" font-family="Liberation Sans" font-weight="700" fill="#c4eef0">Z</text>
    <text x="12.5" y="5" font-size="6" font-family="Liberation Sans" font-weight="700" fill="#1c1c1c">z</text>
  </svg>
</div>
</body></html>
